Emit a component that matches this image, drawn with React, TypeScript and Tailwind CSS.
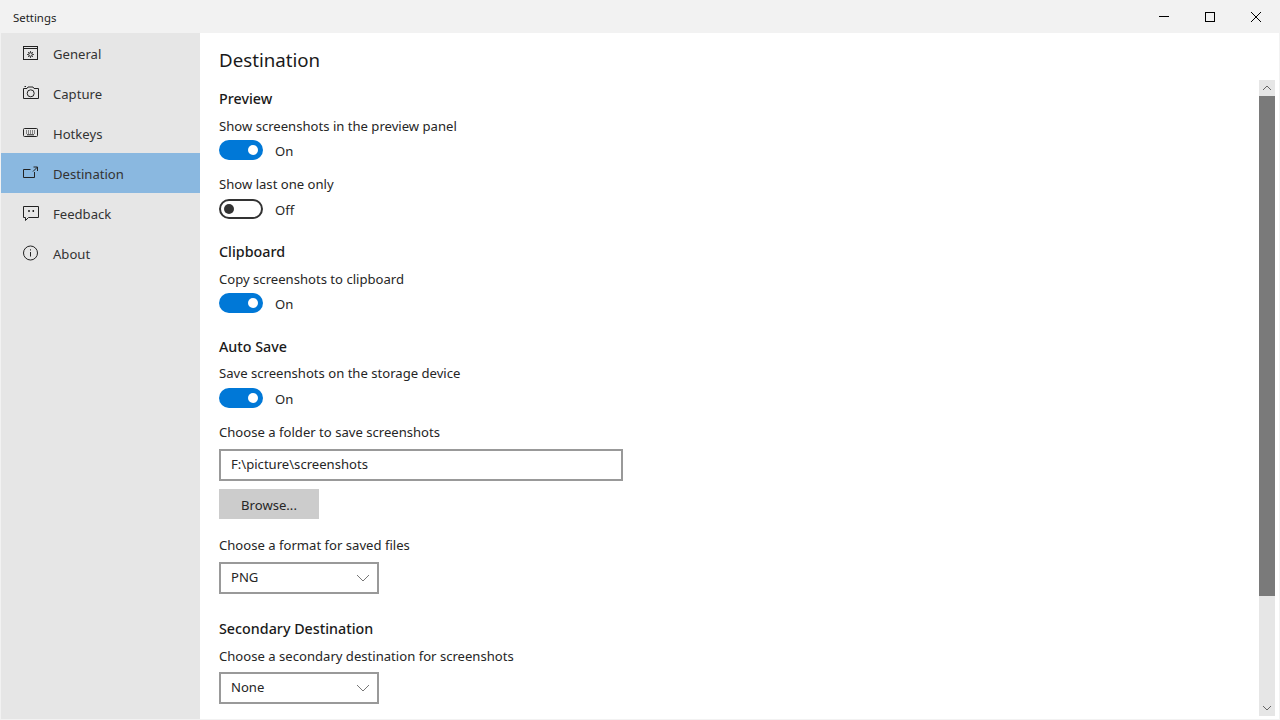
import type { ReactNode } from "react";

const FONT = "font-['Noto_Sans','Open_Sans',sans-serif]";

function Icon({ children }: { children: ReactNode }) {
  return (
    <svg width="18" height="18" viewBox="0 0 18 18" fill="none" stroke="#222" strokeWidth="1" className="shrink-0">
      {children}
    </svg>
  );
}

const navItems: { label: string; active?: boolean; icon: ReactNode }[] = [
  {
    label: "General",
    icon: (
      <>
        <rect x="1.5" y="1.5" width="14" height="13" />
        <path d="M1.5 3.5h14" />
        <circle cx="8.5" cy="9.5" r="1.8" />
        <path d="M8.5 6.2v1.2M8.5 11.6v1.2M5.2 9.5h1.2M10.6 9.5h1.2M6.2 7.2l.8.8M10 11l.8.8M6.2 11.8l.8-.8M10 8l.8-.8" />
      </>
    ),
  },
  {
    label: "Capture",
    icon: (
      <>
        <path d="M1.5 3.5h3.5l1-1.5h5l1 1.5h4.5v10h-15z" />
        <circle cx="8.7" cy="8.3" r="3.5" />
        <path d="M2.5 1.5h1.5" />
      </>
    ),
  },
  {
    label: "Hotkeys",
    icon: (
      <>
        <rect x="1.5" y="3.5" width="14" height="8" rx="1" />
        <path d="M4 6h1M6 6h1M8 6h1M10 6h1M12 6h1" strokeWidth="1.2" />
        <path d="M4 8h1M6 8h1M8 8h1M10 8h1M12 8h1" />
        <path d="M5 9.8h7" />
      </>
    ),
  },
  {
    label: "Destination",
    active: true,
    icon: (
      <>
        <path d="M12.5 7v5.5h-11v-8h7" />
        <path d="M11.5 2h4v4M15.5 2l-4.5 4.5" />
      </>
    ),
  },
  {
    label: "Feedback",
    icon: (
      <>
        <path d="M1.5 1.5h15v11h-10l-3 3v-3h-2z" />
        <path d="M7 5v2M11.3 5v2" strokeWidth="1.5" />
      </>
    ),
  },
  {
    label: "About",
    icon: (
      <>
        <circle cx="8.5" cy="8" r="7" />
        <path d="M8.5 7v4.5M8.5 4.3v1.2" />
      </>
    ),
  },
];

function Heading({ children, className }: { children: ReactNode; className: string }) {
  return <div className={`h-5 pt-px text-[14.3px] leading-5 font-medium text-[#1a1a1a] ${className}`}>{children}</div>;
}

function Label({ children, className }: { children: ReactNode; className: string }) {
  return <div className={`h-5 text-[13.1px] leading-5 text-[#262626] ${className}`}>{children}</div>;
}

function Toggle({ on, className }: { on: boolean; className: string }) {
  return (
    <div className={`flex h-5 items-center ${className}`}>
      {on ? (
        <div className="flex h-5 w-11 items-center justify-end rounded-full bg-[#0078d7] pr-[5px]">
          <div className="h-2.5 w-2.5 rounded-full bg-white" />
        </div>
      ) : (
        <div className="flex h-5 w-11 items-center rounded-full border-2 border-[#333] pl-[3px]">
          <div className="h-2.5 w-2.5 rounded-full bg-[#333]" />
        </div>
      )}
      <span className="ml-3 pt-1 text-[13.1px] text-[#262626]">{on ? "On" : "Off"}</span>
    </div>
  );
}

function Select({ value, className }: { value: string; className: string }) {
  return (
    <div className={`flex h-8 w-40 items-center justify-between border-2 border-[#999] pl-2.5 pr-[7px] text-[13.1px] text-[#262626] ${className}`}>
      {value}
      <svg width="14" height="8" viewBox="0 0 14 8" fill="none" stroke="#777" strokeWidth="1">
        <path d="M1 1l6 6 6-6" />
      </svg>
    </div>
  );
}

export default function App() {
  return (
    <div className={`flex h-[720px] w-[1280px] flex-col overflow-hidden bg-[#f2f2f2] pb-px pr-px pl-px ${FONT}`}>
      <div className="flex h-[33px] shrink-0 items-center justify-between">
        <span className="ml-3 pt-0.5 text-[11.4px] text-[#222]">Settings</span>
        <div className="flex h-full">
          <div className="flex w-[46px] items-center justify-center">
            <div className="h-px w-2.5 bg-black" />
          </div>
          <div className="flex w-[46px] items-center justify-center">
            <div className="h-2.5 w-2.5 border border-black" />
          </div>
          <div className="flex w-[46px] items-center justify-center">
            <svg width="10" height="10" viewBox="0 0 10 10" stroke="#000" strokeWidth="1">
              <path d="M0 0l10 10M10 0L0 10" />
            </svg>
          </div>
        </div>
      </div>
      <div className="flex min-h-0 flex-1">
        <nav className="w-[199px] shrink-0 bg-[#e6e6e6]">
          {navItems.map((item) => (
            <div
              key={item.label}
              className={`flex h-10 items-center gap-[13px] pl-[21px] pt-0.5 text-[13.1px] text-[#333] ${item.active ? "bg-[#8ab8e0]" : ""}`}
            >
              <Icon>{item.icon}</Icon>
              <span className="pt-0.5">{item.label}</span>
            </div>
          ))}
        </nav>
        <main className="flex min-w-0 flex-1 bg-white">
          <div className="flex-1 pl-[19px] pt-[15px]">
            <h1 className="h-6 text-[18.7px] leading-6 text-[#1a1a1a]">Destination</h1>
            <Heading className="mt-4">Preview</Heading>
            <Label className="mt-2">Show screenshots in the preview panel</Label>
            <Toggle on className="mt-1" />
            <Label className="mt-3.5">Show last one only</Label>
            <Toggle on={false} className="mt-[5px]" />
            <Heading className="mt-[22px]">Clipboard</Heading>
            <Label className="mt-2">Copy screenshots to clipboard</Label>
            <Toggle on className="mt-1" />
            <Heading className="mt-[23px]">Auto Save</Heading>
            <Label className="mt-[7px]">Save screenshots on the storage device</Label>
            <Toggle on className="mt-[5px]" />
            <Label className="mt-3.5">Choose a folder to save screenshots</Label>
            <div className="mt-[7px] flex h-8 w-[404px] items-center border-2 border-[#999] pl-2.5 text-[13.1px] text-[#262626]">
              F:\picture\screenshots
            </div>
            <div className="mt-2 flex h-[30px] w-[100px] items-center justify-center bg-[#ccc] pt-1 text-[13.1px] text-[#262626]">
              Browse...
            </div>
            <Label className="mt-4">Choose a format for saved files</Label>
            <Select value="PNG" className="mt-[7px]" />
            <Heading className="mt-6">Secondary Destination</Heading>
            <Label className="mt-2">Choose a secondary destination for screenshots</Label>
            <Select value="None" className="mt-1.5" />
          </div>
          <div className="mb-[3px] mr-1 mt-[47px] flex w-4 flex-col bg-[#e6e6e6]">
            <div className="flex h-4 shrink-0 items-center justify-center">
              <svg width="10" height="6" viewBox="0 0 10 6" fill="none" stroke="#666" strokeWidth="1">
                <path d="M1 5l4-4 4 4" />
              </svg>
            </div>
            <div className="h-[500px] shrink-0 bg-[#7a7a7a]" />
            <div className="flex-1" />
            <div className="flex h-4 shrink-0 items-center justify-center">
              <svg width="10" height="6" viewBox="0 0 10 6" fill="none" stroke="#666" strokeWidth="1">
                <path d="M1 1l4 4 4-4" />
              </svg>
            </div>
          </div>
        </main>
      </div>
    </div>
  );
}
